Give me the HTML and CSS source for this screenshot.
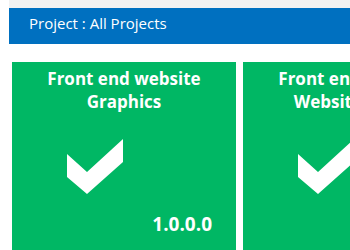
FILE: index.html
```html
<!DOCTYPE html>
<html>
<head>
<meta charset="utf-8">
<link rel="stylesheet" href="styles.css">
</head>
<body>
<div class="page">
  <div class="topband"></div>
  <div class="titlebar">Project : All Projects</div>
  <div class="cards">
    <div class="card">
      <div class="card-title">Front end website<br>Graphics</div>
      <svg class="check" width="58" height="56" viewBox="0 0 58 56">
        <polygon points="1,15 21,33 57,0 57,23 21,55 1,38" fill="#fff"/>
      </svg>
      <div class="version">1.0.0.0</div>
    </div>
    <div class="card">
      <div class="card-title">Front end website<br>Website Demo</div>
      <svg class="check" width="58" height="56" viewBox="0 0 58 56">
        <polygon points="1,15 21,33 57,0 57,23 21,55 1,38" fill="#fff"/>
      </svg>
      <div class="version">1.0.0.0</div>
    </div>
  </div>
</div>
</body>
</html>
```

FILE: styles.css
```css
html, body {
  margin: 0;
  padding: 0;
  background: #fff;
  overflow: hidden;
}
.page {
  width: 350px;
  height: 250px;
  padding-left: 9px;
  box-sizing: border-box;
  font-family: "Open Sans", "Liberation Sans", sans-serif;
  overflow: hidden;
}
.topband {
  height: 8px;
  background: #f2f2f2;
}
.titlebar {
  height: 36px;
  background: #0070c0;
  color: #fff;
  font-size: 15px;
  line-height: 31px;
  padding-left: 20px;
  white-space: nowrap;
}
.cards {
  display: flex;
  gap: 7px;
  margin-top: 18px;
  padding-left: 3px;
}
.card {
  flex: 0 0 224px;
  height: 200px;
  background: #00b764;
  color: #fff;
  display: flex;
  flex-direction: column;
  box-sizing: border-box;
}
.card-title {
  font-weight: bold;
  font-size: 17px;
  line-height: 23px;
  text-align: center;
  padding-top: 5px;
  white-space: nowrap;
}
.check {
  display: block;
  margin-left: 54px;
  margin-top: 26px;
}
.version {
  font-weight: bold;
  font-size: 19px;
  line-height: 24px;
  text-align: right;
  padding-right: 24px;
  margin-top: 17px;
}
```
